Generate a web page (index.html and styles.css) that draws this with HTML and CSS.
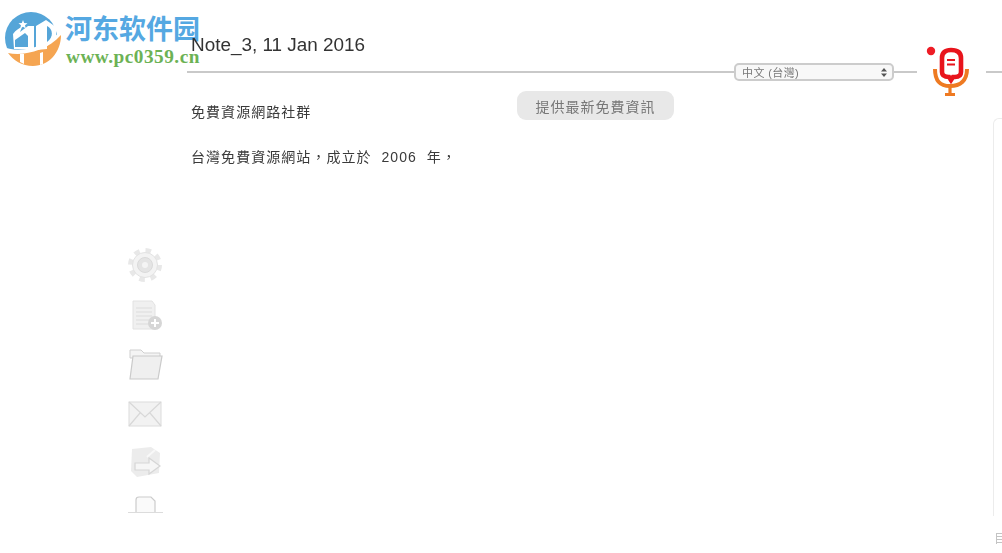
FILE: index.html
```html
<!DOCTYPE html>
<html lang="zh-TW">
<head>
    <meta charset="UTF-8">
    <meta name="viewport" content="width=device-width, initial-scale=1.0">
    <title>Note_3</title>
    <link rel="stylesheet" href="styles.css">
</head>
<body>

    <!-- watermark over the page -->
    <div class="watermark">
        <svg class="watermark-logo" width="65" height="70" viewBox="0 0 65 70">
            <circle cx="31" cy="38" r="26" fill="#55a5d8"/>
            <path d="M2 46 C16 54 44 50 64 28 L64 40 L40 70 L4 70Z" fill="#fff"/>
            <path d="M8 53 C22 56 46 52 61 35 C61 52 49 66 33 66 C22 66 13 60 8 53Z" fill="#f5a552"/>
            <path d="M20 54 L24 54 L24 64 L20 62Z M40 53 L43 52 L43 64 L40 65Z" fill="#fff"/>
            <path d="M13 34 C16 30 19 28 22 27 L20 32 L28 26 L34 26 L34 50 L14 49Z" fill="#fff"/>
            <path d="M15 47 L15 40 L25 33 L28 36 L28 47Z" fill="#55a5d8"/>
            <path d="M36 50 L36 26 L46 20 L56 27 L56 38 L47 46 L47 49Z" fill="#fff"/>
            <path d="M47 26 C53 29 54 37 47 42Z" fill="#55a5d8"/>
            <path d="M23 20 L24.200 23 L27.500 23.300 L25 25.300 L25.800 28.500 L23 26.800 L20.200 28.500 L21 25.300 L18.500 23.300 L21.800 23Z" fill="#fff"/>
        </svg>
        <div class="watermark-text">
            <div class="watermark-name">河东软件园</div>
            <div class="watermark-url">www.pc0359.cn</div>
        </div>
    </div>

    <div class="app">

        <!-- Left toolbar -->
        <div class="toolbar">
            <svg class="tool" width="36" height="36" viewBox="0 0 36 36">
                <circle cx="18" cy="18" r="14.500" fill="none" stroke="#e8e8e8" stroke-width="5" stroke-dasharray="5.500 5.900"/>
                <circle cx="18" cy="18" r="12.500" fill="#f3f3f3" stroke="#e2e2e2"/>
                <circle cx="18" cy="18" r="7.500" fill="#e4e4e4" stroke="#dadada"/>
                <circle cx="18" cy="18" r="3" fill="#f4f4f4"/>
            </svg>
            <svg class="tool" width="36" height="36" viewBox="0 0 36 36">
                <path d="M6 4 L25 4 L28 8 L28 32 L6 32Z" fill="#f0f0f0" stroke="#e2e2e2"/>
                <path d="M9 11 H25 M9 15 H25 M9 19 H25 M9 23 H22 M9 27 H22" stroke="#dcdcdc"/>
                <circle cx="28" cy="26" r="7" fill="#d6d6d6"/>
                <path d="M28 22 V30 M24 26 H32" stroke="#fff" stroke-width="2"/>
            </svg>
            <svg class="tool" width="36" height="36" viewBox="0 0 36 36">
                <path d="M3 4 H14 L17 7 H33 V12 H3Z" fill="#f4f4f4" stroke="#cfcfcf"/>
                <path d="M6 10 H35 L31 33 H3Z" fill="#efefef" stroke="#cacaca" stroke-width="1.200"/>
            </svg>
            <svg class="tool" width="36" height="36" viewBox="0 0 36 36">
                <rect x="2" y="6" width="32" height="24" fill="#f2f2f2" stroke="#dcdcdc"/>
                <path d="M2 6 L18 21 L34 6 M2 30 L13 17 M34 30 L23 17" fill="none" stroke="#d8d8d8" stroke-width="1.200"/>
            </svg>
            <svg class="tool" width="36" height="36" viewBox="0 0 36 36">
                <path d="M5 4 L24 2 L33 8 L32 28 L10 32 L4 26Z" fill="#ececec"/>
                <path d="M8 18 H22 V13 L33 21 L22 29 V25 H8Z" fill="#f6f6f6" stroke="#d6d6d6" stroke-width="1.200"/>
                <path d="M20 12 L28 5" stroke="#f8f8f8" stroke-width="2"/>
            </svg>
            <svg class="tool" width="36" height="18" viewBox="0 0 36 18">
                <path d="M9 17 V5 Q9 2 12 2 H24 L28 6 V17" fill="#fafafa" stroke="#cccccc" stroke-width="1.200"/>
                <path d="M1 17.500 H36" stroke="#dcdcdc"/>
            </svg>
        </div>

        <div class="main">

            <!-- Title and divider -->
            <div class="head">
                <h1 class="note-title">Note_3, 11 Jan 2016</h1>
                <div class="rule rule-long"></div>
                <div class="lang-select">
                    <span>中文 (台灣)</span>
                    <svg width="6" height="9" viewBox="0 0 6 9"><path d="M3 0 L6 3.500 H0Z M3 9 L0 5.500 H6Z" fill="#555"/></svg>
                </div>
                <div class="rule rule-short"></div>
                <svg class="mic" width="46" height="52" viewBox="0 0 46 52">
                    <circle cx="6" cy="6" r="4.200" fill="#ee1c25"/>
                    <path d="M10 24 C10 36 15 41 25 41 C35 41 42 36 42 24" fill="none" stroke="#ee7a22" stroke-width="4"/>
                    <path d="M25 41 V49 M20 49.500 H30" stroke="#ee7a22" stroke-width="3.200"/>
                    <path d="M17 13 Q17 5 26 5 Q36 5 36 13 V27 Q36 32 30 32 L28 32 L26 35 L24 32 Q17 32 17 27Z" fill="#fff" stroke="#e8141c" stroke-width="4.600"/>
                    <path d="M22 15 H30 M22 19.500 H30" stroke="#e8141c" stroke-width="1.800"/>
                </svg>
                <div class="rule rule-end"></div>
            </div>

            <div class="body">
                <div class="content">
                    <div class="content-top">
                        <p class="line line-first">免費資源網路社群</p>
                        <button class="suggest-button">提供最新免費資訊</button>
                    </div>
                    <p class="line">台灣免費資源網站，成立於 2006 年，</p>
                </div>
                <div class="side-panel"></div>
            </div>

        </div>
    </div>

    <!-- resize grip in the corner -->
    <svg class="grip" width="6" height="11" viewBox="0 0 6 11">
        <path d="M0.500 0.500 H6 M0.500 3.500 H6 M0.500 6.500 H6 M0.500 9.500 H6 M0.500 0 V11" stroke="#c4c4c4"/>
    </svg>

</body>
</html>
```

FILE: styles.css
```css
html, body {
    height: 100%;
}

body {
    font-family: "Liberation Sans", "Noto Sans CJK TC", sans-serif;
    margin: 0;
    padding: 0;
    background-color: #fff;
    overflow: hidden;
}

.app {
    display: grid;
    grid-template-columns: 187px 1fr;
    height: 553px;
}

/* Toolbar */
.toolbar {
    display: flex;
    flex-direction: column;
    align-items: flex-end;
    gap: 13.500px;
    padding: 247px 24px 0 0;
}

.tool {
    display: block;
    filter: blur(0.6px);
}

/* Head */
.head {
    display: grid;
    grid-template-columns: 547px 160px 23px 8px 46px 15px 1fr;
    grid-template-rows: 63px 18px;
    align-items: center;
}

.note-title {
    grid-column: 1 / 3;
    grid-row: 1;
    align-self: start;
    margin: 34px 0 0 4px;
    font-size: 18.900px;
    font-weight: normal;
    line-height: 21px;
    color: #333;
    filter: blur(0.4px);
}

.rule {
    height: 2px;
    background-color: #c9c9c9;
    grid-row: 2;
}

.rule-long {
    grid-column: 1;
}

.rule-short {
    grid-column: 3;
}

.rule-end {
    grid-column-start: 7;
}

.lang-select {
    grid-column: 2;
    grid-row: 2;
    display: flex;
    justify-content: space-between;
    align-items: center;
    box-sizing: border-box;
    height: 18px;
    padding: 0 5px 0 6px;
    border: 2px solid #cccccc;
    border-radius: 5px;
    background-color: #f8f8f8;
    font-size: 11px;
    letter-spacing: 0.4px;
    color: #777;
    filter: blur(0.4px);
}

.mic {
    grid-column: 5;
    grid-row: 1 / 3;
    align-self: end;
    margin-bottom: -16px;
    filter: blur(0.4px);
}

/* Body */
.body {
    display: flex;
}

.content {
    flex: 1;
    padding-top: 10px;
}

.content-top {
    display: flex;
    align-items: flex-start;
}

.line {
    margin: 0 0 0 4px;
    font-size: 14px;
    line-height: 20px;
    letter-spacing: 1.050px;
    word-spacing: 5px;
    color: #3a3a3a;
    filter: blur(0.4px);
}

.line-first {
    width: 326px;
    margin-top: 11px;
    margin-bottom: 25px;
}

.suggest-button {
    width: 157px;
    height: 29px;
    padding: 0;
    border: none;
    border-radius: 9px;
    background-color: #e8e8e8;
    font-family: inherit;
    font-size: 14px;
    letter-spacing: 1px;
    color: #777;
    filter: blur(0.4px);
}

.side-panel {
    width: 8px;
    height: 397px;
    margin-top: 37px;
    border-top: 1px solid #ececec;
    border-left: 1px solid #ececec;
    border-top-left-radius: 6px;
}

/* Watermark */
.watermark {
    position: absolute;
    left: 0;
    top: 0;
    display: flex;
}

.watermark-logo {
    display: block;
}

.watermark-name {
    margin-top: 14px;
    font-size: 27px;
    line-height: 32px;
    font-weight: bold;
    color: #55a8e2;
}

.watermark-url {
    margin: 1px 0 0 1px;
    font-family: "Liberation Serif", serif;
    font-size: 19.300px;
    line-height: 20px;
    font-weight: bold;
    letter-spacing: 0.5px;
    color: #6cb255;
}

.grip {
    position: absolute;
    right: 0;
    top: 533px;
}
```
